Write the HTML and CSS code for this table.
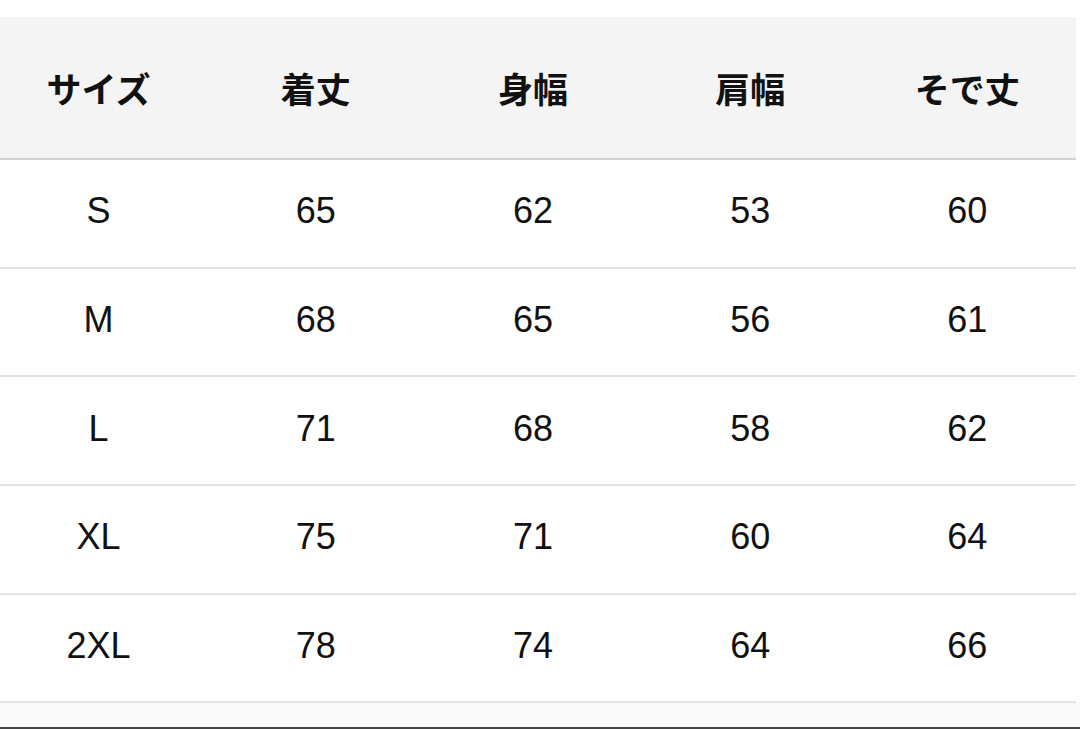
FILE: index.html
```html
<!DOCTYPE html>
<html lang="ja">
<head>
<meta charset="utf-8">
<link rel="stylesheet" href="styles.css">
</head>
<body>
<div class="page">
  <table class="size-table">
    <thead>
      <tr><th>サイズ</th><th>着丈</th><th>身幅</th><th>肩幅</th><th>そで丈</th></tr>
    </thead>
    <tbody>
      <tr><td>S</td><td>65</td><td>62</td><td>53</td><td>60</td></tr>
      <tr><td>M</td><td>68</td><td>65</td><td>56</td><td>61</td></tr>
      <tr><td>L</td><td>71</td><td>68</td><td>58</td><td>62</td></tr>
      <tr><td>XL</td><td>75</td><td>71</td><td>60</td><td>64</td></tr>
      <tr><td>2XL</td><td>78</td><td>74</td><td>64</td><td>66</td></tr>
    </tbody>
  </table>
  <div class="footer-strip"></div>
</div>
</body>
</html>
```
FILE: styles.css
```css
html, body {
  margin: 0;
  padding: 0;
  background: #ffffff;
}
.page {
  width: 1080px;
  height: 729px;
  overflow: hidden;
  padding-top: 17px;
  box-sizing: border-box;
  display: flex;
  flex-direction: column;
}
.size-table {
  margin-left: -10px;
  width: 1086px;
  border-collapse: collapse;
  table-layout: fixed;
  font-family: "Liberation Sans", "Noto Sans CJK JP", sans-serif;
  color: #111;
  flex: none;
}
.size-table th {
  background: #f4f4f4;
  height: 141px;
  padding: 0;
  font-family: "Noto Sans CJK JP", sans-serif;
  font-weight: 700;
  font-size: 35px;
  text-align: center;
  vertical-align: middle;
  border-bottom: 2px solid #d2d2d2;
}
.size-table td {
  height: 108.7px;
  padding: 0 0 4px 0;
  box-sizing: border-box;
  font-size: 36px;
  text-align: center;
  vertical-align: middle;
  border-bottom: 2px solid #e2e2e2;
}
.footer-strip {
  flex: 1;
  background: #fafafa;
  border-bottom: 2px solid #444;
}
```
